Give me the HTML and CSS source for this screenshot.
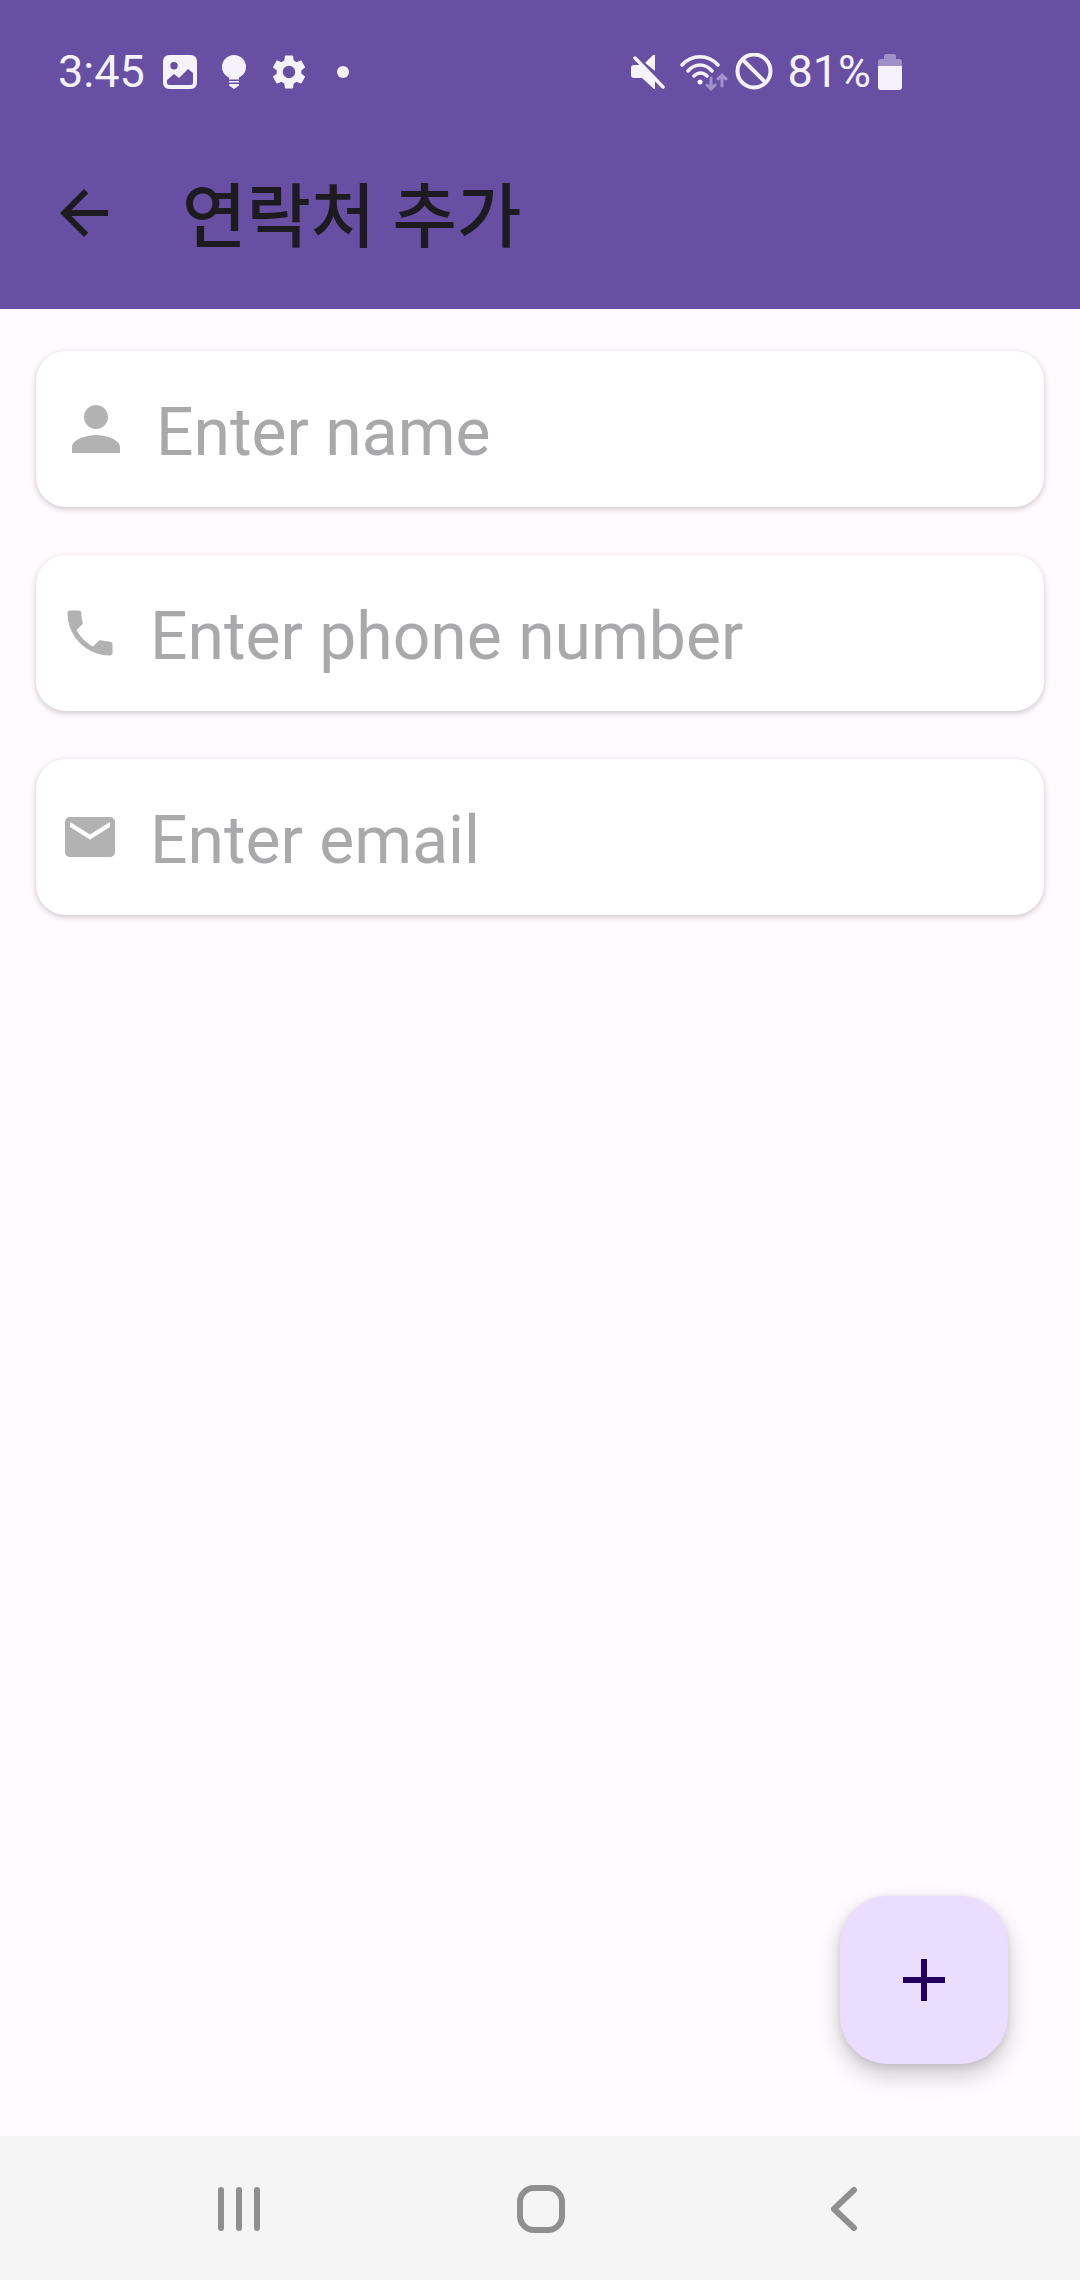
FILE: index.html
```
<!DOCTYPE html>
<html lang="ko">
<head>
<meta charset="utf-8">
<meta name="viewport" content="width=device-width, initial-scale=1">
<title>연락처 추가</title>
<link rel="stylesheet" href="styles.css">
</head>
<body>
<header class="header">
  <div class="status">
    <div class="status-group">
      <span class="status-text">3:45</span>
      <svg class="icon-image" width="34" height="34" viewBox="0 0 34 34" aria-hidden="true"><path fill="currentColor" fill-rule="evenodd" d="M6 0h22a6 6 0 0 1 6 6v22a6 6 0 0 1-6 6H6a6 6 0 0 1-6-6V6a6 6 0 0 1 6-6zm5 7a3.700 3.700 0 1 0 0 7.400a3.700 3.700 0 0 0 0-7.400zM4 25v3a2 2 0 0 0 2 2h22a2 2 0 0 0 2-2V18l-5-4-9 9-5-4z"/></svg>
      <svg class="icon-bulb" width="24" height="34" viewBox="0 0 24 34" aria-hidden="true"><path fill="currentColor" d="M12 0a12 12 0 0 1 12 12c0 5-3 8.500-7 10.500V24.500H7v-2C3 20.500 0 17 0 12A12 12 0 0 1 12 0zM7 26h10v1.500H7zM7 29h10v1.500L12 34l-5-3.500z"/></svg>
      <svg class="icon-gear" width="36" height="36" viewBox="1.500 1.500 21 21" aria-hidden="true"><path fill="currentColor" d="M19.140 12.940c.04-.3.06-.61.06-.94 0-.32-.02-.64-.07-.94l2.030-1.580c.18-.14.23-.41.12-.61l-1.920-3.320c-.12-.22-.37-.29-.59-.22l-2.390.96c-.5-.38-1.030-.7-1.620-.94l-.36-2.540c-.04-.24-.24-.41-.48-.41h-3.840c-.24 0-.43.17-.47.41l-.36 2.540c-.59.24-1.130.57-1.620.94l-2.390-.96c-.22-.08-.47 0-.59.22L2.740 8.870c-.12.21-.08.47.12.61l2.030 1.580c-.05.3-.09.63-.09.94s.02.64.07.94l-2.030 1.580c-.18.14-.23.41-.12.61l1.920 3.320c.12.22.37.29.59.22l2.390-.96c.5.38 1.030.7 1.620.94l.36 2.540c.05.24.24.41.48.41h3.840c.24 0 .44-.17.47-.41l.36-2.540c.59-.24 1.130-.56 1.620-.94l2.390.96c.22.08.47 0 .59-.22l1.920-3.320c.12-.22.07-.47-.12-.61l-2.010-1.580zM12 15.600c-1.980 0-3.600-1.620-3.600-3.600s1.620-3.600 3.600-3.600 3.600 1.620 3.600 3.600-1.620 3.600-3.600 3.600z"/></svg>
      <span class="status-dot"></span>
    </div>
    <div class="status-group">
      <svg class="icon-mute" width="34" height="36" viewBox="0 0 34 36" aria-hidden="true"><path fill="currentColor" d="M24 1v16L14 9l8-8zM3 11h6l15 15v9h-1L11 24H3a3 3 0 0 1-3-3v-7a3 3 0 0 1 3-3z"/><path stroke="#6750a4" stroke-width="2" d="M7 3l26 27"/><path stroke="currentColor" stroke-width="3.500" stroke-linecap="round" d="M4 4l28 29"/></svg>
      <svg class="icon-wifi" width="48" height="38" viewBox="0 0 48 38" aria-hidden="true"><g fill="none" stroke="currentColor" stroke-width="3.500" stroke-linecap="round"><path d="M2 12C12 1 28 1 38 12M8 18c7-8 17-8 24 0M14 23c4-4 9-4 13 0"/><path class="faint" stroke-width="3" d="M31 25v11m-4-4l4 4 4-4M42 33V22m-4 4l4-4 4 4"/></g><circle cx="20" cy="29" r="2.500" fill="currentColor"/></svg>
      <svg class="icon-block" width="38" height="38" viewBox="0 0 38 38" aria-hidden="true"><g fill="none" stroke="currentColor" stroke-width="4"><circle cx="19" cy="18" r="16.500"/><path d="M7.500 6.500l23 23"/></g></svg>
      <span class="status-text">81%</span>
      <svg class="icon-battery" width="24" height="36" viewBox="0 0 24 36" aria-hidden="true"><path class="faint-fill" d="M0 12V8a3 3 0 0 1 3-3h3V2a2 2 0 0 1 2-2h8a2 2 0 0 1 2 2v3h3a3 3 0 0 1 3 3v4z"/><path fill="currentColor" d="M0 12h24v21a3 3 0 0 1-3 3H3a3 3 0 0 1-3-3z"/></svg>
    </div>
  </div>
  <div class="toolbar">
    <button class="back" type="button" aria-label="뒤로"><svg width="72" height="72" viewBox="0 0 24 24" aria-hidden="true"><path fill="currentColor" d="M20 11H7.830l5.590-5.590L12 4l-8 8 8 8 1.410-1.410L7.830 13H20v-2z"/></svg></button>
    <h1 class="title">연락처 추가</h1>
  </div>
</header>
<main class="content">
  <form class="form" id="contact">
    <label class="field field-wide">
      <svg width="72" height="72" viewBox="0 0 24 24" aria-hidden="true"><path fill="currentColor" d="M12 12c2.210 0 4-1.790 4-4s-1.790-4-4-4-4 1.790-4 4 1.790 4 4 4zm0 2c-2.670 0-8 1.340-8 4v2h16v-2c0-2.660-5.330-4-8-4z"/></svg>
      <input class="input" type="text" placeholder="Enter name" aria-label="Enter name">
    </label>
    <label class="field">
      <svg width="60" height="60" viewBox="0 0 24 24" aria-hidden="true"><path fill="currentColor" d="M6.620 10.790c1.440 2.830 3.760 5.140 6.590 6.590l2.200-2.200c.27-.27.67-.36 1.020-.24 1.120.37 2.330.57 3.570.57.55 0 1 .45 1 1V20c0 .55-.45 1-1 1-9.390 0-17-7.610-17-17 0-.55.45-1 1-1h3.500c.55 0 1 .45 1 1 0 1.250.2 2.450.57 3.570.11.35.03.74-.25 1.020l-2.200 2.200z"/></svg>
      <input class="input" type="tel" placeholder="Enter phone number" aria-label="Enter phone number">
    </label>
    <label class="field">
      <svg width="60" height="60" viewBox="0 0 24 24" aria-hidden="true"><path fill="currentColor" d="M20 4H4c-1.100 0-1.990.9-1.990 2L2 18c0 1.100.9 2 2 2h16c1.100 0 2-.9 2-2V6c0-1.100-.9-2-2-2zm0 4l-8 5-8-5V6l8 5 8-5v2z"/></svg>
      <input class="input" type="email" placeholder="Enter email" aria-label="Enter email">
    </label>
  </form>
  <button class="fab" type="submit" form="contact" aria-label="추가"><svg width="72" height="72" viewBox="0 0 24 24" aria-hidden="true"><path fill="currentColor" d="M19 13h-6v6h-2v-6H5v-2h6V5h2v6h6v2z"/></svg></button>
</main>
<nav class="nav">
  <button class="nav-button" type="button" aria-label="최근 앱"><svg width="48" height="48" viewBox="0 0 48 48" aria-hidden="true"><path d="M6 5v38M24 5v38M42 5v38"/></svg></button>
  <button class="nav-button" type="button" aria-label="홈"><svg width="48" height="48" viewBox="0 0 48 48" aria-hidden="true"><rect x="3" y="3" width="42" height="42" rx="14"/></svg></button>
  <button class="nav-button" type="button" aria-label="이전"><svg width="48" height="48" viewBox="0 0 48 48" aria-hidden="true"><path d="M35 5L15 24l20 19"/></svg></button>
</nav>
</body>
</html>
```
FILE: styles.css
```
* {
  box-sizing: border-box;
}

body {
  margin: 0;
  min-height: 100vh;
  display: flex;
  flex-direction: column;
  background: #fffbff;
  font-family: Roboto, "Noto Sans CJK KR", sans-serif;
}

svg {
  display: block;
  flex: none;
}

button {
  display: flex;
  align-items: center;
  justify-content: center;
  padding: 0;
  border: 0;
  background: none;
}

.header {
  background: #6750a4;
  padding-bottom: 12px;
}

.status {
  display: flex;
  justify-content: space-between;
  height: 129px;
  padding: 14px 178px 0 58px;
  color: #f5f2fb;
}

.status-group {
  display: flex;
  align-items: center;
}

.status-text {
  font-size: 45px;
  line-height: 54px;
}

.icon-image {
  margin-left: 18px;
}

.icon-bulb,
.icon-gear {
  margin-left: 25px;
}

.status-dot {
  width: 12px;
  height: 12px;
  margin-left: 30px;
  border-radius: 50%;
  background: currentColor;
}

.icon-wifi {
  margin-left: 15px;
}

.icon-block {
  margin: 0 14px 0 7px;
}

.icon-battery {
  margin-left: 7px;
}

.faint {
  stroke: #a392cb;
}

.faint-fill {
  fill: #a08fc9;
}

.toolbar {
  display: flex;
  align-items: center;
  gap: 62px;
  height: 168px;
  padding: 0 48px;
  color: #1d1b20;
}

.back {
  color: inherit;
}

.title {
  margin: 0;
  padding-top: 10px;
  font-size: 70px;
  font-weight: 500;
  line-height: 96px;
}

.content {
  flex: 1;
  display: flex;
  flex-direction: column;
  justify-content: space-between;
  padding: 42px 36px 72px;
}

.form {
  display: flex;
  flex-direction: column;
  gap: 48px;
}

.field {
  display: flex;
  align-items: center;
  gap: 30px;
  height: 156px;
  padding: 0 24px;
  border-radius: 30px;
  background: #fff;
  color: #b2b2b2;
  box-shadow: 0 2px 6px rgba(0, 0, 0, 0.22);
}

.field-wide {
  gap: 24px;
}

.input {
  flex: 1;
  min-width: 0;
  height: 100%;
  padding: 6px 0 0;
  border: 0;
  outline: 0;
  background: none;
  color: #1d1b20;
  font: inherit;
  font-size: 66px;
}

.input::placeholder {
  color: #a9a9ab;
  opacity: 1;
}

.fab {
  align-self: flex-end;
  width: 168px;
  height: 168px;
  margin-right: 36px;
  border-radius: 48px;
  background: #eaddff;
  color: #21005d;
  box-shadow: 0 12px 24px rgba(0, 0, 0, 0.2), 0 2px 8px rgba(0, 0, 0, 0.1);
}

.nav {
  display: flex;
  height: 144px;
  padding: 0 8%;
  background: #f5f5f5;
}

.nav-button {
  flex: 1;
  padding: 2px 0 0 2px;
}

.nav-button svg {
  fill: none;
  stroke: #8f8f8f;
  stroke-width: 6;
  stroke-linecap: round;
  stroke-linejoin: round;
}
```
